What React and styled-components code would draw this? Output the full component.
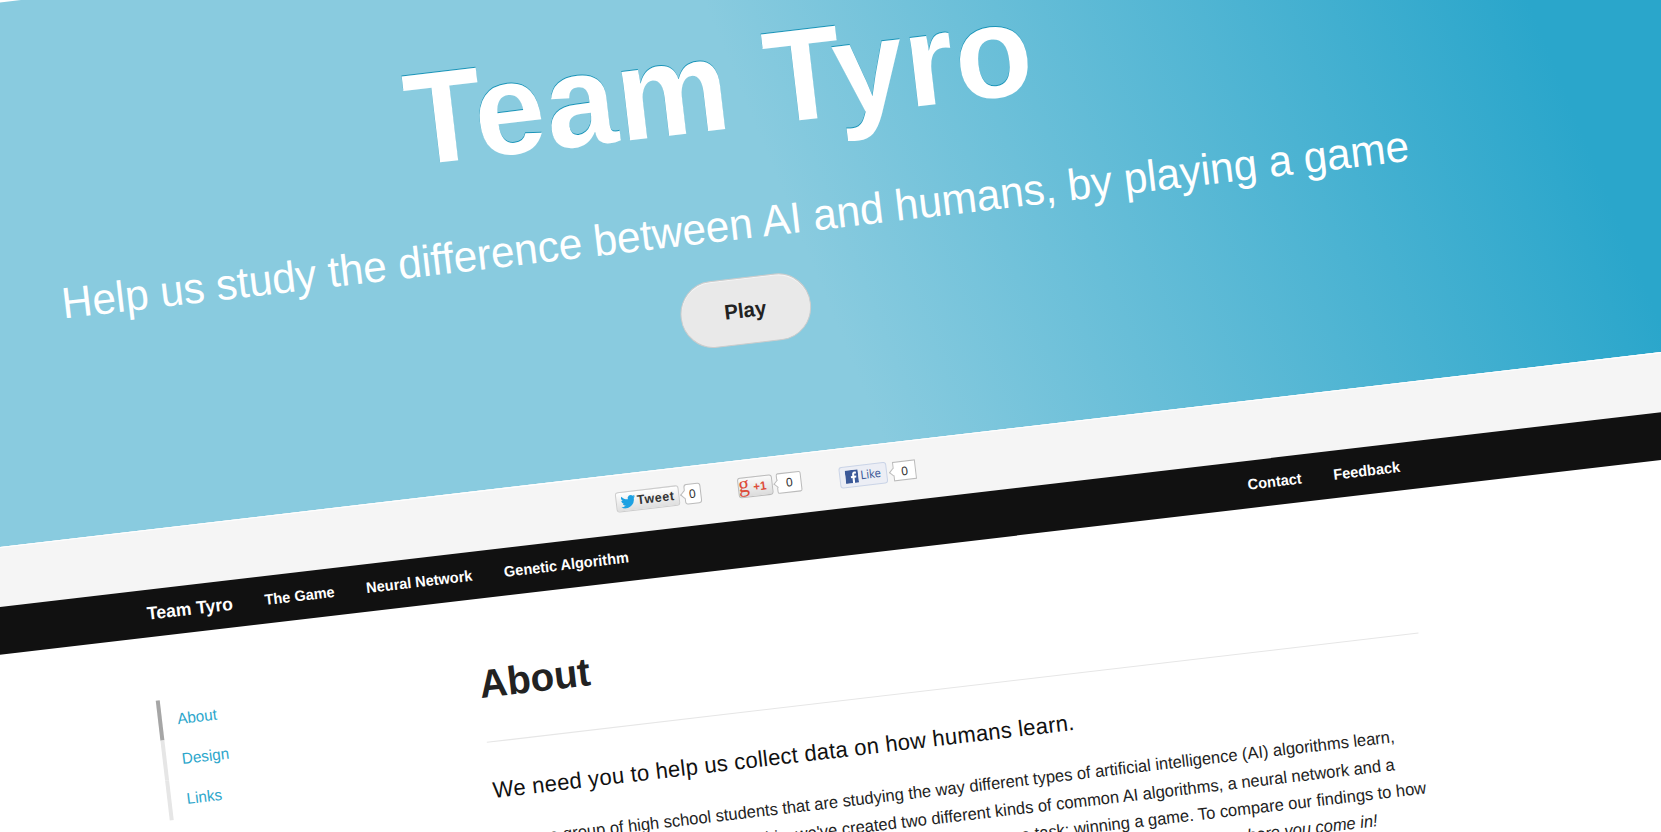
import React from "react";
import styled, { createGlobalStyle } from "styled-components";

const Global = createGlobalStyle`
  html, body { margin: 0; background: #fff; overflow: hidden; }
  body { font-family: "Liberation Sans", Arial, sans-serif; color: #222; }
  * { box-sizing: border-box; }
`;

const Viewport = styled.div`
  width: 1661px;
  height: 832px;
  overflow: hidden;
`;

const Tilted = styled.div`
  width: 1900px;
  height: 1000px;
  transform-origin: 0 0;
  transform: matrix(0.99319, -0.1165, 0.12, 1.023, -100, 14.2);
`;

const HeroBand = styled.div`
  height: 524.8px;
  background: linear-gradient(74deg, #89cbdf 892px, #2aa6cb 1654px);
`;

const Hero = styled.header`
  height: 524px;
  padding-top: 85px;
  display: flex;
  flex-direction: column;
  align-items: center;
  width: 1610px;
  color: #fff;
`;

const Title = styled.h1`
  margin: 0;
  font-size: 126.5px;
  line-height: 150px;
  font-weight: 700;
  letter-spacing: 1.1px;
  white-space: nowrap;
  text-shadow: 0 -1px 0 #1a94b8;
`;

const Tagline = styled.p`
  margin: 33.8px 0 0;
  font-size: 42.3px;
  line-height: 58px;
  white-space: nowrap;
`;

const PlayButton = styled.button`
  margin-top: 22px;
  width: 131px;
  height: 65.5px;
  padding: 0;
  border: 1px solid #ccc;
  border-radius: 33px;
  background: #e9e9e9;
  box-shadow: inset 0 1px 0 rgba(255, 255, 255, 0.5);
  font: 700 20.4px "Liberation Sans", Arial, sans-serif;
  color: #222;
`;

const ShareBar = styled.div`
  height: 57.8px;
  border-top: 1px solid #fff;
  background: #f5f5f5;
  padding: 16.2px 0 0 654px;
  display: flex;
  align-items: flex-start;
`;

const Share = styled.div`
  display: flex;
  align-items: center;
  gap: ${(p) => p.$gap}px;
  margin-right: ${(p) => p.$after || 0}px;
  margin-top: ${(p) => p.$drop || 0}px;
`;

const ShareButton = styled.span`
  display: flex;
  align-items: center;
  padding-left: ${(p) => p.$inset}px;
  gap: ${(p) => p.$gap}px;
  width: ${(p) => p.$width}px;
  height: 20.5px;
  border: 1px solid ${(p) => p.$edge};
  border-radius: 3px;
  background: ${(p) => p.$fill};
  color: ${(p) => p.$ink};
  font: ${(p) => p.$font};
  letter-spacing: ${(p) => p.$tracking || 0}px;
`;

const Count = styled.span`
  position: relative;
  width: ${(p) => p.$width}px;
  height: ${(p) => p.$height || 20.5}px;
  border: 1px solid #bbb;
  border-radius: ${(p) => p.$radius}px;
  background: #fff;
  display: flex;
  align-items: center;
  justify-content: center;
  font-size: 12px;
  color: #333;
  &::before {
    content: "";
    position: absolute;
    left: -3.5px;
    top: 6px;
    width: 5px;
    height: 5px;
    border-left: 1px solid #bbb;
    border-bottom: 1px solid #bbb;
    background: #fff;
    transform: rotate(45deg);
  }
`;

const NavBar = styled.nav`
  height: 46.8px;
  background: #111;
  padding-left: 159.5px;
`;

const NavRow = styled.div`
  width: 1293.5px;
  display: flex;
`;

const NavLink = styled.a`
  padding: 0 16px;
  line-height: 46.8px;
  font-size: ${(p) => (p.$brand ? 17.6 : 14.55)}px;
  font-weight: 700;
  color: #fff;
  white-space: nowrap;
`;

const Spacer = styled.div`
  flex: 1;
`;

const Main = styled.main`
  display: flex;
  padding-left: 174px;
`;

const SideNav = styled.ul`
  list-style: none;
  margin: 61.8px 0 0;
  padding: 0;
  width: 323.5px;
`;

const SideItem = styled.li`
  height: 39px;
  line-height: 39px;
  border-left: 4.5px solid ${(p) => (p.$active ? "#a6a6a6" : "#e6e6e6")};
  padding-left: 15.3px;
  font-size: 15.2px;
  color: #2ba6cb;
`;

const Article = styled.article`
  width: 938.5px;
`;

const Heading = styled.h2`
  margin: 59.3px 0 0;
  font-size: 38.5px;
  line-height: 46px;
  color: #222;
`;

const Rule = styled.hr`
  margin: 33.1px 0 0;
  border: 0;
  border-top: 1px solid #e6e6e6;
`;

const Lead = styled.h3`
  margin: 31px 0 0;
  padding-left: 1px;
  font-size: 22px;
  line-height: 31px;
  font-weight: 400;
  letter-spacing: 0.26px;
  color: #111;
  white-space: nowrap;
`;

const Copy = styled.p`
  margin: 22.7px 0 0;
  font-size: 16.55px;
  line-height: 26.1px;
  color: #222;
`;

const Line = styled.span`
  display: flex;
  justify-content: flex-end;
  white-space: pre;
  padding-right: ${(p) => p.$end}px;
`;

const Bird = () => (
  <svg width="15" height="13" viewBox="0 0 24 20" fill="#1da1e2">
    <path d="M24 2.4c-.9.4-1.8.6-2.8.8 1-.6 1.8-1.6 2.1-2.7-.9.6-2 1-3.1 1.2A4.9 4.9 0 0 0 11.8 6.2C7.7 6 4.1 4 1.7 1c-1.3 2.2-.7 5.1 1.5 6.6-.8 0-1.6-.2-2.2-.6 0 2.3 1.6 4.4 3.9 4.9-.7.2-1.5.2-2.2.1.6 2 2.4 3.4 4.6 3.4A9.9 9.9 0 0 1 0 17.5 14 14 0 0 0 21.5 5c1-.7 1.8-1.6 2.5-2.6z" />
  </svg>
);

const FacebookMark = () => (
  <svg width="13" height="13" viewBox="0 0 13 13">
    <rect width="13" height="13" fill="#3b5998" />
    <path d="M7 13V8H5.5V6H7V4.7C7 3 8 2 9.6 2H11v2H10c-.7 0-.9.3-.9.9V6H11l-.3 2H9.1v5z" fill="#fff" />
  </svg>
);

const GoogleG = styled.span`
  font: 400 22px/14px "Liberation Serif", serif;
  margin-top: -6px;
`;

export default function App() {
  return (
    <>
      <Global />
      <Viewport>
        <Tilted>
          <HeroBand>
            <Hero>
              <Title>Team Tyro</Title>
              <Tagline>Help us study the difference between AI and humans, by playing a game</Tagline>
              <PlayButton>Play</PlayButton>
            </Hero>
          </HeroBand>
          <ShareBar>
            <Share $gap={5} $after={37}>
              <ShareButton $width={63.5} $inset={4} $gap={1.5} $tracking={0.6} $edge="#ccc" $ink="#333" $fill="linear-gradient(#fff, #dedede)" $font='700 12.5px "Liberation Sans", sans-serif'>
                <Bird />
                Tweet
              </ShareButton>
              <Count $width={17} $radius={3}>0</Count>
            </Share>
            <Share $gap={4.5} $after={38}>
              <ShareButton $width={35.3} $inset={0} $gap={4} $edge="#bbb" $ink="#dd4b39" $fill="linear-gradient(#fafafa, #dcdcdc)" $font='700 11.5px "Liberation Sans", sans-serif'>
                <GoogleG>g</GoogleG>
                +1
              </ShareButton>
              <Count $width={25} $radius={2}>0</Count>
            </Share>
            <Share $gap={6} $drop={1.5}>
              <ShareButton $width={47.5} $inset={5} $gap={2} $edge="#cad4e7" $ink="#3b5998" $fill="#eceef5" $font='400 11.3px "DejaVu Sans Condensed", "DejaVu Sans", sans-serif'>
                <FacebookMark />
                Like
              </ShareButton>
              <Count $width={23.5} $height={19} $radius={0}>0</Count>
            </Share>
          </ShareBar>
          <NavBar>
            <NavRow>
              <NavLink $brand>Team Tyro</NavLink>
              <NavLink>The Game</NavLink>
              <NavLink>Neural Network</NavLink>
              <NavLink>Genetic Algorithm</NavLink>
              <Spacer />
              <NavLink>Contact</NavLink>
              <NavLink>Feedback</NavLink>
            </NavRow>
          </NavBar>
          <Main>
            <SideNav>
              <SideItem $active>About</SideItem>
              <SideItem>Design</SideItem>
              <SideItem>Links</SideItem>
            </SideNav>
            <Article>
              <Heading>About</Heading>
              <Rule />
              <Lead>We need you to help us collect data on how humans learn.</Lead>
              <Copy>
                <Line $end={36}>We are a group of high school students that are studying the way different types of artificial intelligence (AI) algorithms learn,</Line>
                <Line $end={39}>and solve problems. To do this, we've created two different kinds of common AI algorithms, a neural network and a</Line>
                <Line $end={10.5}>genetic algorithm, that will both be given the same task: winning a game. To compare our findings to how</Line>
                <Line $end={62.5}><em>humans learn, we need your help. That's where you come in!</em></Line>
              </Copy>
            </Article>
          </Main>
        </Tilted>
      </Viewport>
    </>
  );
}
